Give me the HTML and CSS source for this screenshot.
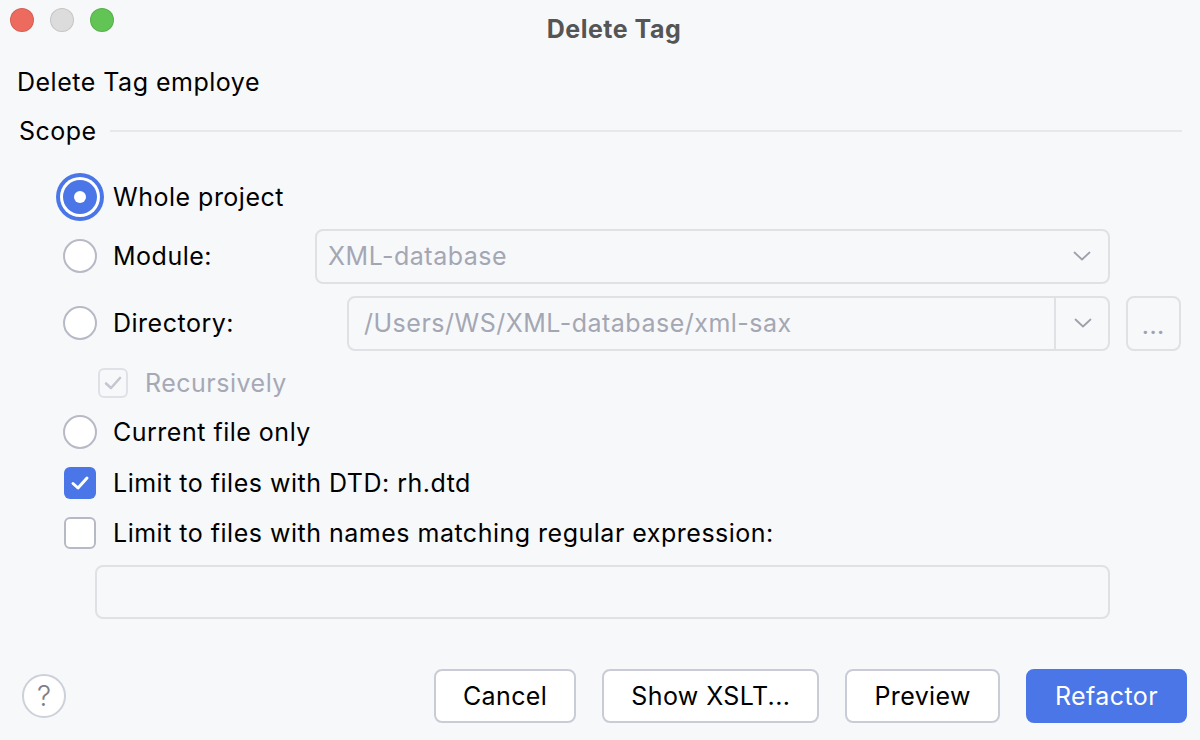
FILE: index.html
```html
<!DOCTYPE html>
<html lang="en">
<head>
	<meta charset="UTF-8" />
	<title>Delete Tag</title>
	<link rel="stylesheet" href="styles.css">
</head>
<body>
	<div class="dialog">
		<div class="titlebar">
			<div class="lights">
				<span class="light red"></span>
				<span class="light gray"></span>
				<span class="light green"></span>
			</div>
			<div class="title">Delete Tag</div>
		</div>

		<div class="content">
			<div class="heading">Delete Tag employe</div>

			<div class="group-title">
				<span>Scope</span>
				<div class="separator"></div>
			</div>

			<div class="options">
				<div class="row row-whole">
					<span class="radio checked focused"></span>
					<label>Whole project</label>
				</div>

				<div class="row row-module">
					<span class="radio"></span>
					<label class="label-module">Module:</label>
					<div class="combo disabled">
						<span class="combo-text">XML-database</span>
						<span class="combo-arrow">
							<svg width="18" height="10" viewBox="0 0 18 10"><path d="M1.5 1.5 L9 8.5 L16.5 1.5" fill="none" stroke="#9ea1ab" stroke-width="1.8" stroke-linecap="round" stroke-linejoin="round"/></svg>
						</span>
					</div>
				</div>

				<div class="row row-directory">
					<span class="radio"></span>
					<label class="label-directory">Directory:</label>
					<div class="combo disabled">
						<span class="combo-text">/Users/WS/XML-database/xml-sax</span>
						<span class="combo-arrow split">
							<svg width="18" height="10" viewBox="0 0 18 10"><path d="M1.5 1.5 L9 8.5 L16.5 1.5" fill="none" stroke="#9ea1ab" stroke-width="1.8" stroke-linecap="round" stroke-linejoin="round"/></svg>
						</span>
					</div>
					<button class="browse" disabled>...</button>
				</div>

				<div class="row row-recursive">
					<span class="checkbox checked disabled">
						<svg width="20" height="16" viewBox="0 0 20 16"><path d="M3 8.5 L8 13 L17 3" fill="none" stroke="#c4c7d0" stroke-width="2.6" stroke-linecap="round" stroke-linejoin="round"/></svg>
					</span>
					<label class="muted">Recursively</label>
				</div>

				<div class="row row-current">
					<span class="radio"></span>
					<label>Current file only</label>
				</div>

				<div class="row row-dtd">
					<span class="checkbox checked">
						<svg width="22" height="18" viewBox="0 0 22 18"><path d="M4 9.5 L9 14 L18 4" fill="none" stroke="#fff" stroke-width="3" stroke-linecap="round" stroke-linejoin="round"/></svg>
					</span>
					<label>Limit to files with DTD: rh.dtd</label>
				</div>

				<div class="row row-regex">
					<span class="checkbox"></span>
					<label>Limit to files with names matching regular expression:</label>
				</div>

				<input class="regex-input" type="text" />
			</div>
		</div>

		<div class="footer">
			<button class="help">?</button>
			<div class="actions">
				<button class="btn">Cancel</button>
				<button class="btn">Show XSLT...</button>
				<button class="btn">Preview</button>
				<button class="btn primary">Refactor</button>
			</div>
		</div>
	</div>
</body>
</html>
```

FILE: styles.css
```css
* {
	box-sizing: border-box;
}

body {
	margin: 0;
	background: #f7f8fa;
	color: #000;
	font-family: Inter, "Open Sans", sans-serif;
	font-size: 25px;
	letter-spacing: 0.5px;
}

.dialog {
	width: 1200px;
	height: 740px;
	display: flex;
	flex-direction: column;
}

/* window chrome */
.titlebar {
	height: 62px;
	display: flex;
	align-items: flex-start;
	position: relative;
}

.lights {
	display: flex;
	gap: 16px;
	padding: 8px 0 0 10px;
}

.light {
	width: 24px;
	height: 24px;
	border-radius: 50%;
	border: 1px solid rgba(0, 0, 0, 0.1);
}

.light.red { background: #ed6a5e; }
.light.gray { background: #dcdcdc; }
.light.green { background: #61c454; }

.title {
	position: absolute;
	left: 0;
	right: 0;
	top: 14px;
	text-align: center;
	padding-left: 28px;
	font-weight: 700;
	color: #555;
	font-size: 25px;
}

.content {
	padding: 0 18px 0 17px;
}

.heading {
	height: 40px;
	line-height: 40px;
}

.group-title {
	height: 58px;
	display: flex;
	align-items: center;
	gap: 13px;
	padding-left: 2px;
}

.separator {
	flex: 1;
	height: 2px;
	background: #e7e8ec;
}

.options {
	padding-top: 10px;
	padding-left: 46px;
}

.row {
	display: flex;
	align-items: center;
	gap: 16px;
}

.row-whole { height: 54px; }
.row-module { height: 64px; }
.row-directory { height: 70px; }
.row-recursive { height: 50px; padding-left: 34px; gap: 16px; }
.row-current { height: 48px; }
.row-dtd { height: 54px; }
.row-regex { height: 46px; }

label {
	white-space: nowrap;
}

label.muted {
	color: #a6a9b5;
}

.label-module { width: 186px; }
.label-directory { width: 218px; }

/* radio buttons */
.radio {
	flex: none;
	width: 34px;
	height: 34px;
	border-radius: 50%;
	border: 2px solid #b7bac6;
	background: #fff;
	position: relative;
}

.radio.checked {
	border: none;
	background: #4a76e8;
}

.radio.checked::after {
	content: "";
	position: absolute;
	left: 11px;
	top: 11px;
	width: 12px;
	height: 12px;
	border-radius: 50%;
	background: #fff;
}

.radio.focused {
	box-shadow: 0 0 0 3px #fff, 0 0 0 7px #4a76e8;
}

/* checkboxes */
.checkbox {
	flex: none;
	width: 32px;
	height: 32px;
	margin: 0 1px;
	border-radius: 6px;
	border: 2px solid #b7bac6;
	background: #fff;
	display: flex;
	align-items: center;
	justify-content: center;
}

.checkbox.checked {
	border: none;
	background: #4a76e8;
}

.checkbox.checked.disabled {
	width: 30px;
	height: 30px;
	border: 2px solid #dfe1e6;
	background: #f7f8fa;
}

/* combo boxes */
.combo {
	flex: none;
	width: 795px;
	height: 55px;
	display: flex;
	align-items: center;
	border: 2px solid #dfe1e5;
	border-radius: 8px;
	color: #a4a7b3;
}

.row-directory .combo {
	width: 763px;
}

.combo-text {
	flex: 1;
	padding-left: 11px;
}

.row-directory .combo-text {
	padding-left: 15px;
}

.combo-arrow {
	width: 54px;
	height: 100%;
	display: flex;
	align-items: center;
	justify-content: center;
	padding-left: 2px;
}

.combo-arrow.split {
	border-left: 2px solid #dfe1e5;
}

.browse {
	width: 55px;
	height: 55px;
	border: 2px solid #dfe1e5;
	border-radius: 8px;
	background: #f7f8fa;
	color: #9ea1b1;
	font-family: inherit;
	font-size: 20px;
	font-weight: 700;
	letter-spacing: 1px;
	padding: 8px 0 0;
}

.regex-input {
	display: block;
	margin: 9px 0 0 32px;
	width: 1015px;
	height: 54px;
	border: 2px solid #dfe1e5;
	border-radius: 8px;
	background: #f7f8fa;
}

/* bottom buttons */
.footer {
	margin-top: auto;
	height: 71px;
	padding: 0 13px 17px 22px;
	display: flex;
	align-items: flex-start;
	justify-content: space-between;
}

.help {
	margin-top: 5px;
	width: 44px;
	height: 44px;
	border-radius: 50%;
	border: 2px solid #cdd0d8;
	background: #fff;
	color: #7c7f8a;
	font-family: inherit;
	font-size: 28px;
	font-weight: 300;
	padding: 0;
}

.actions {
	display: flex;
	gap: 26px;
}

.btn {
	height: 54px;
	padding: 0 27px;
	border: 2px solid #c9ccd6;
	border-radius: 8px;
	background: #fff;
	color: #000;
	font-family: inherit;
	font-size: 25px;
	letter-spacing: 0.4px;
}

.btn.primary {
	border-color: #4a76e8;
	background: #4a76e8;
	color: #fff;
}
```
